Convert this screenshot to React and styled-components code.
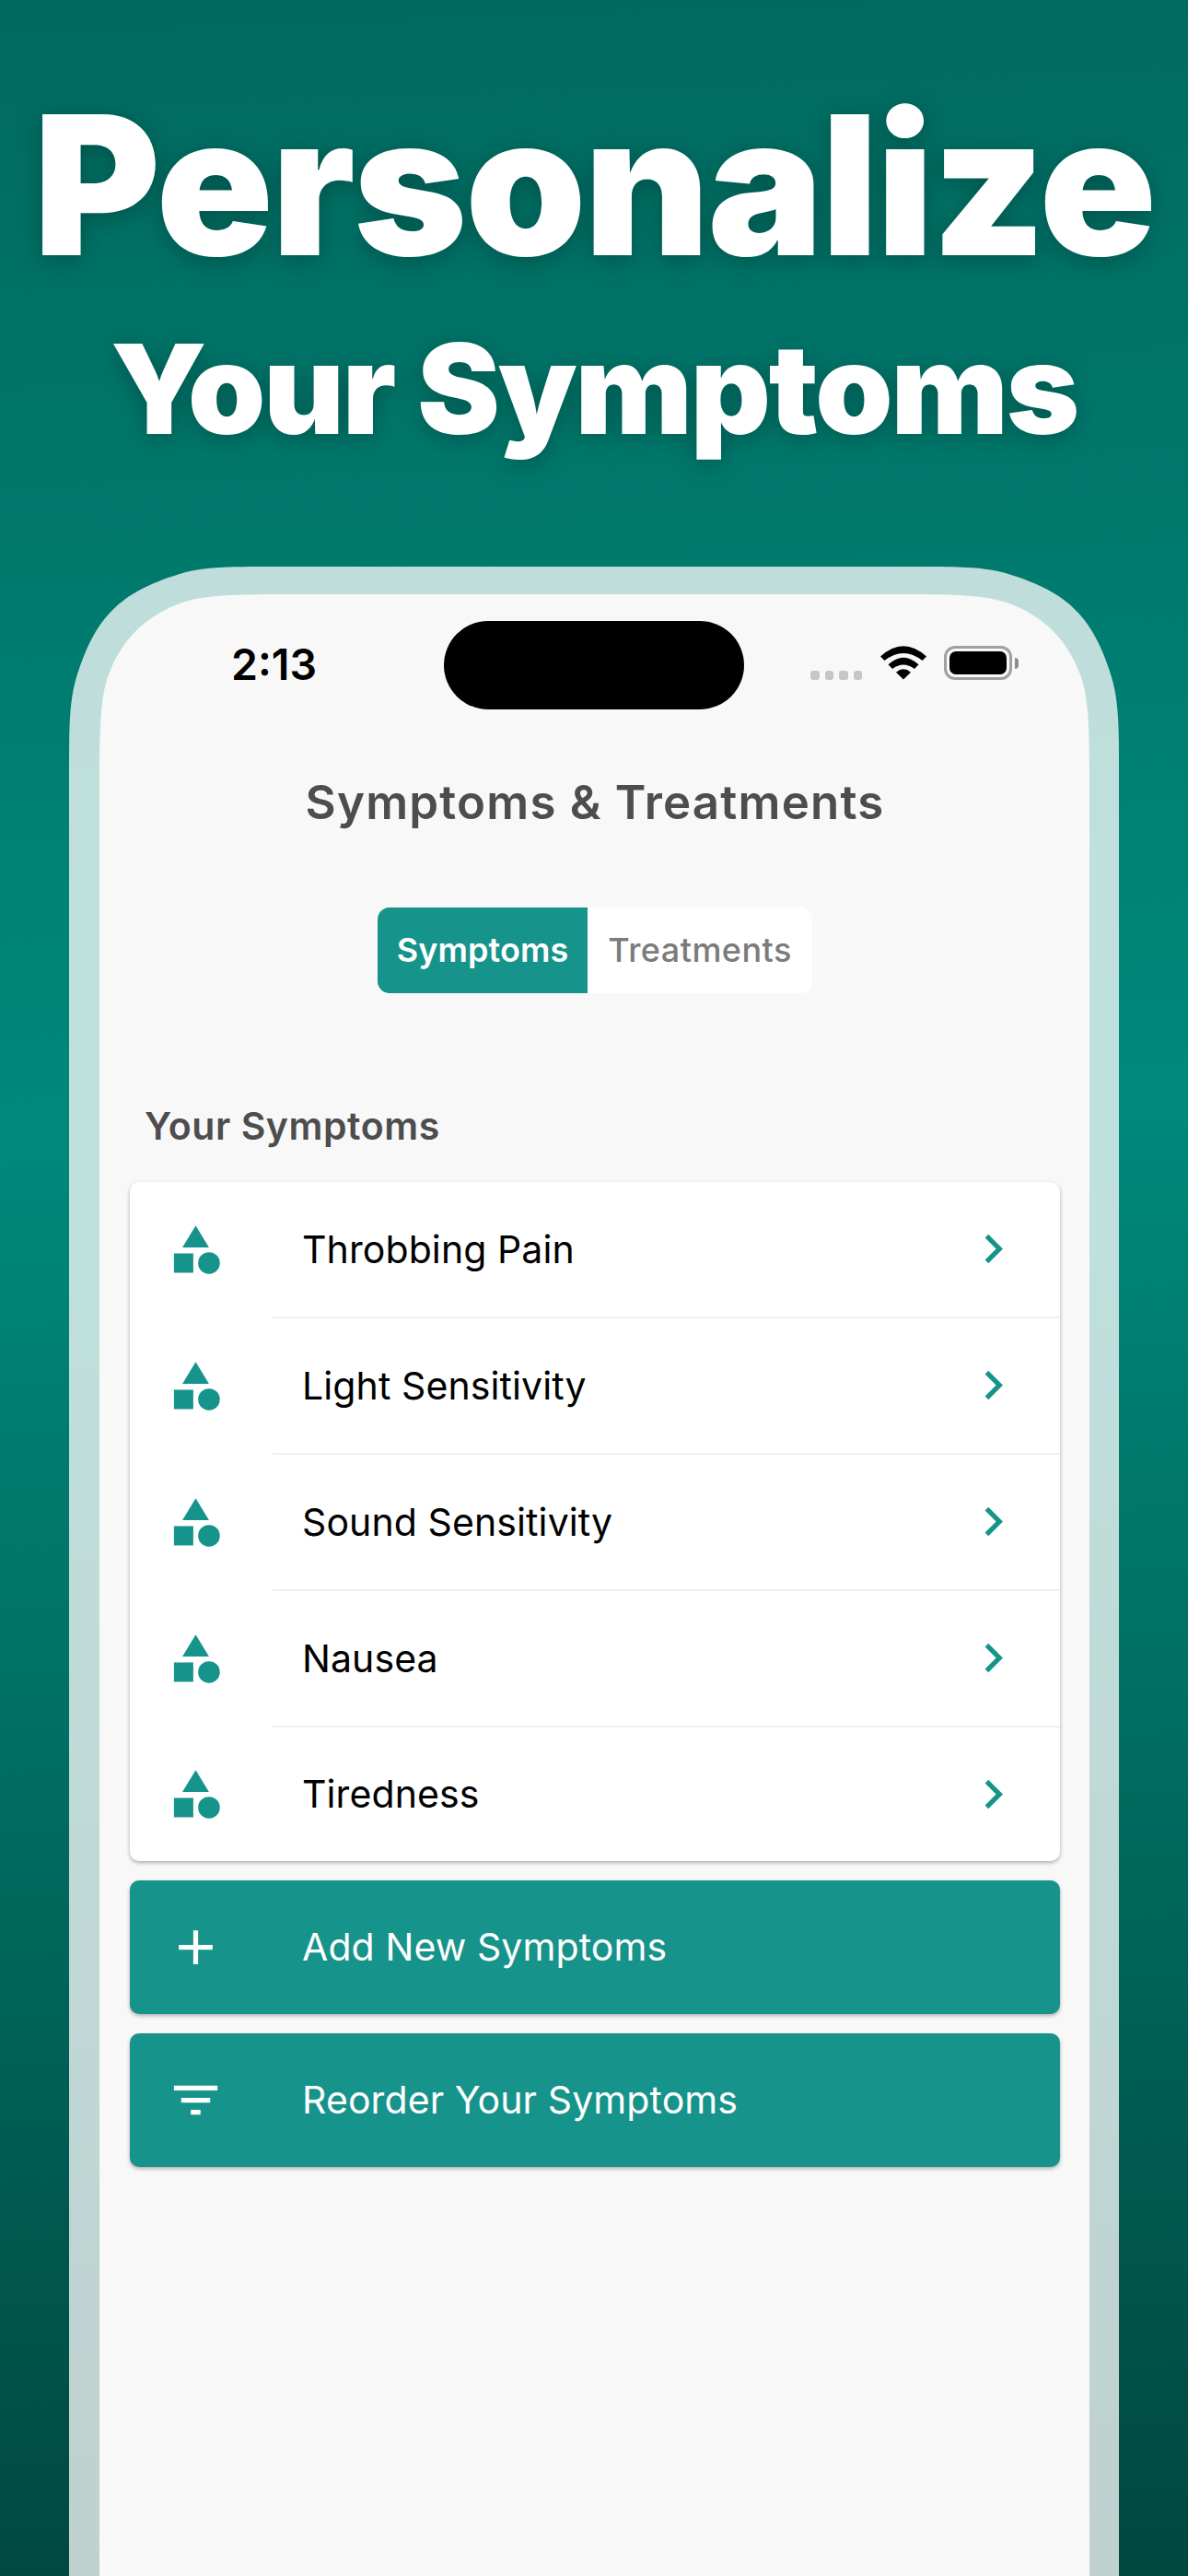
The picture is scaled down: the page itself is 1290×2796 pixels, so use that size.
import React from 'react';
import styled, { createGlobalStyle } from 'styled-components';
import { MdAdd, MdCategory, MdChevronRight, MdFilterList } from 'react-icons/md';

const TEAL = '#16938a';

const GlobalStyle = createGlobalStyle`
  body {
    margin: 0;
    font-family: Inter, 'Liberation Sans', sans-serif;
  }
`;

const Poster = styled.main`
  box-sizing: border-box;
  display: flex;
  flex-direction: column;
  align-items: center;
  width: 1290px;
  height: 2796px;
  overflow: hidden;
  background: linear-gradient(178deg, #00695f 0%, #00897b 43.5%, #004740 100%);
`;

const Headline = styled.header`
  box-sizing: border-box;
  display: flex;
  flex-direction: column;
  align-items: center;
  flex: none;
  height: 615px;
  padding-top: 96px;
  color: #fff;
  white-space: nowrap;
  text-shadow: 0 5px 26px rgba(0, 0, 0, 0.25);
`;

const Title = styled.h1`
  margin: 0;
  font-size: 210px;
  font-weight: 900;
  line-height: 211px;
  letter-spacing: -2.1px;
`;

const Subtitle = styled.h2`
  margin: 48px 0 0;
  font-size: 135px;
  font-weight: 900;
  line-height: 135px;
  letter-spacing: -2.1px;
`;

const Phone = styled.section`
  box-sizing: border-box;
  flex: none;
  width: 1140px;
  height: 2181px;
  padding: 30px 32px 0 33px;
  background: rgba(255, 255, 255, 0.75);
  clip-path: path('M0 2181 V225 C0 175 0 147 8 120 C28 55 55 28 120 8 C147 0 175 0 225 0 H915 C965 0 993 0 1020 8 C1085 28 1112 55 1132 120 C1140 147 1140 175 1140 225 V2181 Z');
`;

const Screen = styled.div`
  box-sizing: border-box;
  display: flex;
  flex-direction: column;
  width: 1075px;
  height: 2151px;
  padding: 0 32px 0 33px;
  background: #f8f8f8;
  clip-path: path('M0 2151 V200 C0 150 1 112 9 90 C23 50 50 23 90 9 C112 1 150 0 200 0 H875 C925 0 963 1 985 9 C1025 23 1052 50 1066 90 C1074 112 1075 150 1075 200 V2151 Z');
`;

const StatusBar = styled.div`
  display: flex;
  align-items: center;
  height: 97px;
  padding-top: 28px;
`;

const Clock = styled.span`
  box-sizing: border-box;
  width: 233px;
  margin-bottom: 2px;
  padding-left: 110px;
  font-size: 46.5px;
  font-weight: 600;
  line-height: 56px;
`;

const Island = styled.div`
  width: 326px;
  height: 96px;
  margin-left: 108px;
  border-radius: 48px;
  background: #000;
`;

const Signal = styled.div`
  display: flex;
  gap: 6px;
  margin: 23px 20px 0 72px;
`;

const SignalDot = styled.i`
  width: 9.5px;
  height: 9.5px;
  border-radius: 3px;
  background: #c6c6c6;
`;

const Wifi = styled.svg`
  width: 50px;
  height: 37px;
  margin-bottom: 4px;
`;

const Battery = styled.div`
  display: flex;
  align-items: center;
  gap: 3px;
  margin: 0 0 4px 19px;
`;

const BatteryCase = styled.div`
  box-sizing: border-box;
  width: 74px;
  height: 37px;
  padding: 3px;
  border: 3px solid #a0a0a0;
  border-radius: 12px;

  &::before {
    content: '';
    display: block;
    height: 100%;
    border-radius: 7px;
    background: #000;
  }
`;

const BatteryTip = styled.i`
  width: 4px;
  height: 12px;
  border-radius: 0 5px 5px 0;
  background: #8c8c8c;
`;

const PageTitle = styled.h3`
  margin: 69px 0 0;
  color: #4d4d4d;
  font-size: 51px;
  font-weight: 570;
  line-height: 64px;
  letter-spacing: 1.2px;
  text-align: center;
`;

const Tabs = styled.div`
  display: flex;
  align-self: center;
  margin-top: 82px;
  overflow: hidden;
  border-radius: 13px;
  background: #fff;
`;

const Tab = styled.button`
  width: ${({ $width }) => $width}px;
  height: 93px;
  padding: 0 0 1px;
  border: 0;
  background: ${({ $active }) => ($active ? TEAL : '#fff')};
  color: ${({ $active }) => ($active ? '#fff' : '#7b7b7b')};
  font-family: inherit;
  font-size: 36px;
  font-weight: ${({ $active }) => ($active ? 570 : 460)};
  letter-spacing: ${({ $active }) => ($active ? 0.1 : 0.45)}px;
`;

const SectionTitle = styled.h4`
  margin: 119px 0 0 16px;
  color: #4d4d4d;
  font-size: 41px;
  font-weight: 570;
  line-height: 50px;
  letter-spacing: 0.55px;
`;

const Card = styled.div`
  flex: none;
  margin-top: ${({ $gap }) => $gap}px;
  border-radius: 10px;
  background: ${({ $filled }) => ($filled ? TEAL : '#fff')};
  color: ${({ $filled }) => ($filled ? '#fff' : '#000')};
  box-shadow: 0 2px 4px rgba(0, 0, 0, 0.3);
`;

const Row = styled.div`
  display: flex;
  align-items: center;
  height: 145px;
`;

const RowIcon = styled.span`
  box-sizing: border-box;
  display: flex;
  width: 155px;
  padding-left: 40px;
  color: ${({ $light }) => ($light ? '#fff' : TEAL)};
`;

const RowBody = styled.div`
  box-sizing: border-box;
  display: flex;
  flex: 1;
  align-items: center;
  justify-content: space-between;
  height: 100%;
  padding: 0 41px 1px 32px;
  font-size: 41px;
  letter-spacing: 0.1px;

  svg {
    color: ${TEAL};
  }
`;

const List = styled.div`
  ${Row}:not(:last-child) {
    height: 148px;
  }

  ${Row}:not(:last-child) ${RowIcon} {
    padding-bottom: 2px;
  }

  ${Row}:not(:last-child) ${RowBody} {
    border-bottom: 2px solid #efefef;
  }
`;

const WifiIcon = () => (
  <Wifi viewBox="0 0 50 37">
    <path d="M0 11.5 Q25 -11 50 11.5 L45.500 16 Q25 0 4.500 16 Z" />
    <path d="M8.500 20.300 Q25 5 41.500 20.300 L37 25 Q25 16 13 25 Z" />
    <path d="M17 28.700 Q25 22 33 28.700 L25 36.500 Z" />
  </Wifi>
);

const symptoms = [
  'Throbbing Pain',
  'Light Sensitivity',
  'Sound Sensitivity',
  'Nausea',
  'Tiredness',
];

const ActionCard = ({ icon, label }) => (
  <Card $filled $gap={21}>
    <Row>
      <RowIcon $light>{icon}</RowIcon>
      <RowBody>{label}</RowBody>
    </Row>
  </Card>
);

const App = () => (
  <>
    <GlobalStyle />
    <Poster>
      <Headline>
        <Title>Personalize</Title>
        <Subtitle>Your Symptoms</Subtitle>
      </Headline>
      <Phone>
        <Screen>
          <StatusBar>
            <Clock>2:13</Clock>
            <Island />
            <Signal>
              <SignalDot />
              <SignalDot />
              <SignalDot />
              <SignalDot />
            </Signal>
            <WifiIcon />
            <Battery>
              <BatteryCase />
              <BatteryTip />
            </Battery>
          </StatusBar>
          <PageTitle>Symptoms &amp; Treatments</PageTitle>
          <Tabs>
            <Tab $active $width={228}>Symptoms</Tab>
            <Tab $width={244}>Treatments</Tab>
          </Tabs>
          <SectionTitle>Your Symptoms</SectionTitle>
          <Card $gap={36}>
            <List>
              {symptoms.map(name => (
                <Row key={name}>
                  <RowIcon><MdCategory size={63} /></RowIcon>
                  <RowBody>
                    {name}
                    <MdChevronRight size={63} />
                  </RowBody>
                </Row>
              ))}
            </List>
          </Card>
          <ActionCard icon={<MdAdd size={63} />} label="Add New Symptoms" />
          <ActionCard icon={<MdFilterList size={63} />} label="Reorder Your Symptoms" />
        </Screen>
      </Phone>
    </Poster>
  </>
);

export default App;
